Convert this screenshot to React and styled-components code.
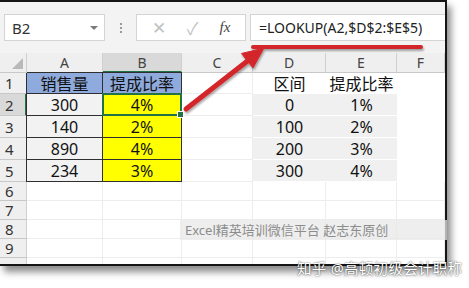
import React from "react";
import styled, { createGlobalStyle, css } from "styled-components";

const GlobalStyle = createGlobalStyle`
  body {
    margin: 0;
    background: #fff;
    font-family: "Noto Sans", "Noto Sans CJK SC", sans-serif;
  }
`;

const Stage = styled.div`
  position: relative;
  width: 469px;
  height: 288px;
  overflow: hidden;
  background: #fff;
`;

const Frame = styled.div`
  width: 447px;
  height: 266px;
  box-sizing: border-box;
  border-top: 2px solid #151515;
  border-right: 2px solid #151515;
  border-bottom: 2px solid #151515;
  box-shadow: 4px 6px 7px rgba(0, 0, 0, 0.45);
  background: #fff;
  display: flex;
  flex-direction: column;
  overflow: hidden;
`;

const Toolbar = styled.div`
  flex: 0 0 51px;
  background: #f3f3f3;
  display: flex;
  align-items: center;
  padding-left: 4px;
  box-sizing: border-box;
`;

const Box = styled.div`
  height: 27px;
  box-sizing: border-box;
  background: #fff;
  border: 1px solid #d4d4d4;
  display: flex;
  align-items: center;
`;

const NameBox = styled(Box)`
  width: 101px;
  padding: 0 6px 0 7px;
  justify-content: space-between;
  font-size: 15px;
  color: #333;
`;

const Caret = styled.span`
  width: 0;
  height: 0;
  border-left: 4px solid transparent;
  border-right: 4px solid transparent;
  border-top: 4px solid #7a7a7a;
`;

const Dots = styled.div`
  width: 31px;
  display: flex;
  flex-direction: column;
  align-items: center;
  gap: 2px;
  span {
    width: 2px;
    height: 2px;
    background: #9a9a9a;
  }
`;

const ButtonBox = styled(Box)`
  width: 110px;
  justify-content: space-around;
  padding: 0 4px;
  font-size: 17px;
  color: #c2c2c2;
`;

const Fx = styled.span`
  font-family: "Liberation Serif", serif;
  font-style: italic;
  font-size: 15px;
  color: #444;
`;

const FormulaBox = styled(Box)`
  flex: 1;
  margin-left: 4px;
  border-right: none;
  padding-left: 8px;
  font-size: 14px;
  color: #222;
`;

const Sheet = styled.div`
  flex: 1;
  display: grid;
  grid-template-columns: 27px 76px 79px 71px 73px 71px 1fr;
  grid-template-rows: 20px 21px repeat(4, 22px) repeat(4, 19px) 1fr;
`;

const Head = styled.div`
  background: ${(p) => (p.$active ? "#d9d9d9" : "#efefef")};
  color: #444;
  font-size: 14px;
  display: flex;
  align-items: center;
  justify-content: center;
  box-sizing: border-box;
  border-right: 1px solid #d0d0d0;
  border-bottom: 1px solid #c8c8c8;
  ${(p) => p.$active && p.$col && css`border-bottom: 2px solid #217346;`}
  ${(p) => p.$active && p.$row && css`border-right: 2px solid #217346;`}
`;

const Corner = styled(Head)`
  position: relative;
  &::after {
    content: "";
    position: absolute;
    right: 3px;
    bottom: 3px;
    border-left: 11px solid transparent;
    border-bottom: 11px solid #b9b9b9;
  }
`;

const RowHead = styled(Head)`
  font-size: 15px;
  justify-content: flex-start;
  padding-left: 5px;
  color: #333;
`;

const Cell = styled.div`
  box-sizing: border-box;
  border-right: 1px solid #ededed;
  border-bottom: 1px solid #ededed;
  background: #fff;
`;

const fills = {
  blue: "#8faadc",
  gray: "#f2f2f2",
  yellow: "#ffff00",
};

const TableCell = styled.div`
  box-sizing: border-box;
  margin: -1px 0 0 -1px;
  border: 1px solid #2f2f2f;
  background: ${(p) => fills[p.$fill]};
  display: flex;
  align-items: center;
  justify-content: center;
  font-size: 16px;
  color: #111;
  ${(p) =>
    p.$selected &&
    css`
      position: relative;
      z-index: 1;
      border: 2px solid #217346;
      &::after {
        content: "";
        position: absolute;
        right: -4px;
        bottom: -4px;
        width: 5px;
        height: 5px;
        background: #217346;
        border: 1px solid #fff;
      }
    `}
`;

const RefCell = styled.div`
  box-sizing: border-box;
  background: ${(p) => (p.$shade ? "#f0f0f0" : "#fff")};
  border-bottom: 1px solid #fff;
  display: flex;
  align-items: center;
  justify-content: center;
  font-size: 16px;
  color: #111;
`;

const Watermark = styled.div`
  position: absolute;
  left: 180px;
  top: 220px;
  width: 267px;
  height: 20px;
  background: rgba(232, 232, 232, 0.75);
  color: #8c8c8c;
  font-size: 13px;
  line-height: 20px;
  padding-left: 5px;
  box-sizing: border-box;
`;

const Credit = styled.div`
  position: absolute;
  left: 297px;
  top: 257px;
  color: #fff;
  font-size: 14.5px;
  letter-spacing: 0.3px;
  text-shadow: 0 0 2px rgba(0, 0, 0, 0.55), 0 0 1px rgba(0, 0, 0, 0.4);
`;

const Overlay = styled.svg`
  position: absolute;
  left: 0;
  top: 0;
  pointer-events: none;
`;

const cols = ["A", "B", "C", "D", "E", "F"];
const sales = ["300", "140", "890", "234"];
const rates = ["4%", "2%", "4%", "3%"];
const ref = [
  ["0", "1%"],
  ["100", "2%"],
  ["200", "3%"],
  ["300", "4%"],
];

function Rows() {
  const out = [];
  for (let r = 1; r <= 10; r++) {
    out.push(
      <RowHead key={`h${r}`} $active={r === 2} $row>
        {r}
      </RowHead>
    );
    if (r === 1) {
      out.push(<TableCell key="a1" $fill="blue">销售量</TableCell>);
      out.push(<TableCell key="b1" $fill="blue">提成比率</TableCell>);
    } else if (r <= 5) {
      out.push(<TableCell key={`a${r}`} $fill="gray">{sales[r - 2]}</TableCell>);
      out.push(
        <TableCell key={`b${r}`} $fill="yellow" $selected={r === 2}>
          {rates[r - 2]}
        </TableCell>
      );
    } else {
      out.push(<Cell key={`a${r}`} />, <Cell key={`b${r}`} />);
    }
    out.push(<Cell key={`c${r}`} />);
    if (r === 1) {
      out.push(<RefCell key="d1">区间</RefCell>, <RefCell key="e1">提成比率</RefCell>);
      out.push(<RefCell key="f1" />);
    } else if (r <= 5) {
      out.push(
        <RefCell key={`d${r}`} $shade>{ref[r - 2][0]}</RefCell>,
        <RefCell key={`e${r}`} $shade>{ref[r - 2][1]}</RefCell>,
        <RefCell key={`f${r}`} />
      );
    } else {
      out.push(<Cell key={`d${r}`} />, <Cell key={`e${r}`} />, <Cell key={`f${r}`} />);
    }
  }
  return out;
}

export default function App() {
  return (
    <Stage>
      <GlobalStyle />
      <Frame>
        <Toolbar>
          <NameBox>
            B2
            <Caret />
          </NameBox>
          <Dots>
            <span />
            <span />
            <span />
          </Dots>
          <ButtonBox>
            <span>✕</span>
            <span>✓</span>
            <Fx>fx</Fx>
          </ButtonBox>
          <FormulaBox>=LOOKUP(A2,$D$2:$E$5)</FormulaBox>
        </Toolbar>
        <Sheet>
          <Corner />
          {cols.map((c) => (
            <Head key={c} $active={c === "B"} $col>
              {c}
            </Head>
          ))}
          <Rows />
        </Sheet>
      </Frame>
      <Watermark>Excel精英培训微信平台 赵志东原创</Watermark>
      <Credit>知乎 @高顿初级会计职称</Credit>
      <Overlay width="469" height="288" viewBox="0 0 469 288">
        <defs>
          <filter id="sh" x="-20%" y="-20%" width="140%" height="140%">
            <feDropShadow dx="1" dy="2" stdDeviation="1.2" floodColor="#000" floodOpacity="0.35" />
          </filter>
        </defs>
        <g filter="url(#sh)" fill="#d3272b" stroke="#d3272b">
          <line x1="253" y1="47" x2="421" y2="47" strokeWidth="4" strokeLinecap="round" />
          <line x1="186" y1="109" x2="250" y2="59" strokeWidth="5" strokeLinecap="round" />
          <polygon points="264,48 241.5,53.5 253,68" strokeWidth="1" strokeLinejoin="round" />
        </g>
      </Overlay>
    </Stage>
  );
}
